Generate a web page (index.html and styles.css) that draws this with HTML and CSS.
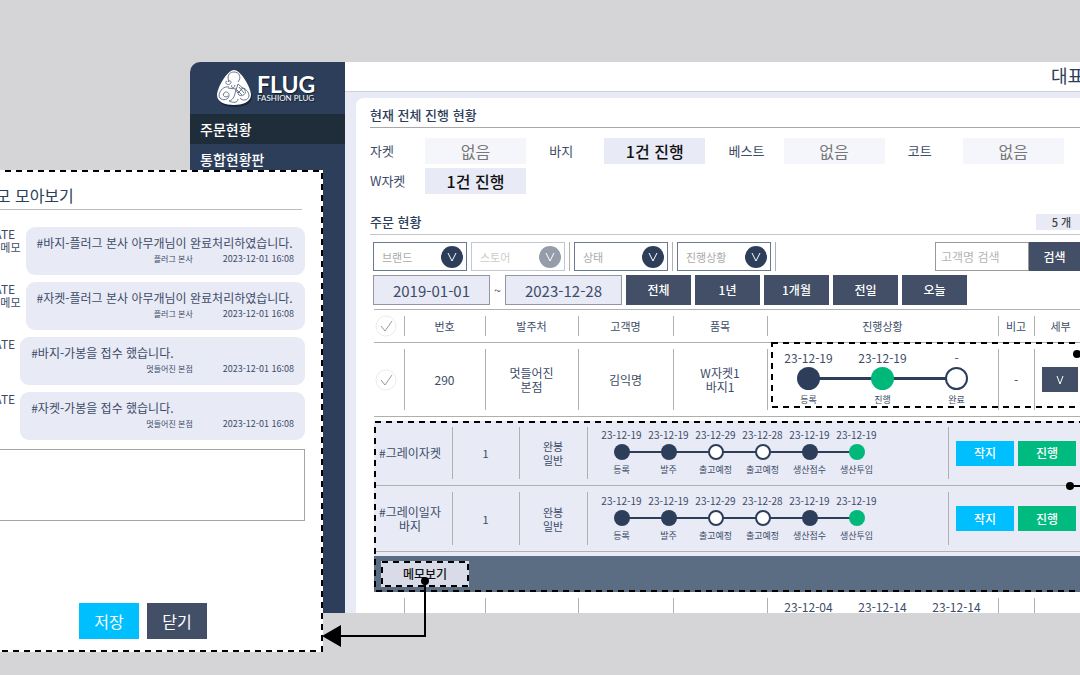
FILE: index.html
```html
<!DOCTYPE html>
<html lang="ko">
<head>
<meta charset="utf-8">
<title>FLUG 주문현황</title>
<link rel="stylesheet" href="styles.css">
</head>
<body>
<div class="app">
  <aside class="sidebar">
    <a class="logo" href="#">
      <svg class="logo-mark" viewBox="0 0 36 38" aria-hidden="true">
        <path class="logo-shadow" d="M19 3C26 3 36 21 36 28C36 35 27 38 19 38C10 38 2 35 2 28C2 21 12 3 19 3Z"/>
        <path class="logo-body" d="M18 1C25 1 35 19 35 26C35 33 26 36 18 36C9 36 1 33 1 26C1 19 11 1 18 1Z"/>
        <g class="logo-lines">
          <path d="M13 13C10 5 15 3 18 3C23 3 26 8 22 13"/>
          <path d="M11 12C8 13 11 17 14 15C17 13 13 10 12 13M16 16C14 19 19 20 19 16"/>
          <path d="M13 18C8 17 4 21 3 26C3 31 9 32 12 29C15 25 11 21 8 24C6 27 9 29 12 27"/>
          <path d="M25 19C29 18 33 23 33 27C32 32 26 32 24 29"/>
          <path d="M12 19L20 20C19 25 18 31 13 32C17 34 22 34 22 30"/>
          <path d="M22 15L29 21C31 25 26 28 23 26L20 21ZM23 18L28 24M21 21L26 26M27 19L22 24"/>
        </g>
      </svg>
      <span class="logo-text"><strong>FLUG</strong><small>FASHION PLUG</small></span>
    </a>
    <nav class="menu">
      <a class="menu-item active" href="#">주문현황</a>
      <a class="menu-item" href="#">통합현황판</a>
    </nav>
  </aside>

  <main class="main">
    <header class="topbar">대표</header>
    <div class="panel">
      <h2 class="section-title">현재 전체 진행 현황</h2>
      <div class="summary">
        <div class="stat"><span>자켓</span><b class="none">없음</b></div>
        <div class="stat"><span>바지</span><b>1건 진행</b></div>
        <div class="stat"><span>베스트</span><b class="none">없음</b></div>
        <div class="stat"><span>코트</span><b class="none">없음</b></div>
        <div class="stat"><span>W자켓</span><b>1건 진행</b></div>
      </div>

      <div class="section-title orders-title"><h2>주문 현황</h2><span class="count">5 개</span></div>

      <form class="filters">
        <div class="filter-row">
          <div class="pick"><select aria-label="브랜드"><option>브랜드</option></select><svg viewBox="0 0 22 22"><circle cx="11" cy="11" r="11"/><path d="M7 7L11 15L15 7"/></svg></div>
          <div class="pick muted"><select aria-label="스토어" disabled><option>스토어</option></select><svg viewBox="0 0 22 22"><circle cx="11" cy="11" r="11"/><path d="M7 7L11 15L15 7"/></svg></div>
          <i class="bar"></i>
          <div class="pick"><select aria-label="상태"><option>상태</option></select><svg viewBox="0 0 22 22"><circle cx="11" cy="11" r="11"/><path d="M7 7L11 15L15 7"/></svg></div>
          <i class="bar"></i>
          <div class="pick"><select aria-label="진행상황"><option>진행상황</option></select><svg viewBox="0 0 22 22"><circle cx="11" cy="11" r="11"/><path d="M7 7L11 15L15 7"/></svg></div>
          <i class="bar"></i>
          <div class="search"><input type="text" aria-label="고객명 검색" placeholder="고객명 검색"><button type="button">검색</button></div>
        </div>
        <div class="filter-row dates">
          <input type="text" aria-label="시작일" value="2019-01-01"><span>~</span><input type="text" aria-label="종료일" value="2023-12-28">
          <div class="ranges">
            <button type="button">전체</button>
            <button type="button">1년</button>
            <button type="button">1개월</button>
            <button type="button">전일</button>
            <button type="button">오늘</button>
          </div>
        </div>
      </form>

      <table class="orders">
        <colgroup><col class="c-check"><col class="c-no"><col class="c-shop"><col class="c-name"><col class="c-item"><col class="c-progress"><col class="c-note"><col></colgroup>
        <thead>
          <tr>
            <th><label class="check"><input type="checkbox" aria-label="전체 선택"><svg viewBox="0 0 22 22"><circle cx="11" cy="11" r="10"/><path d="M6 11L10 16L17 6"/></svg></label></th>
            <th>번호</th><th>발주처</th><th>고객명</th><th>품목</th><th>진행상황</th><th>비고</th><th>세부</th>
          </tr>
        </thead>
        <tbody>
          <tr>
            <td><label class="check"><input type="checkbox" aria-label="290 선택"><svg viewBox="0 0 22 22"><circle cx="11" cy="11" r="10"/><path d="M6 11L10 16L17 6"/></svg></label></td>
            <td>290</td><td>멋들어진<br>본점</td><td>김익명</td><td>W자켓1<br>바지1</td>
            <td class="progress-cell">
              <ol class="steps">
                <li><time>23-12-19</time><i class="dot"></i><span>등록</span></li>
                <li><time>23-12-19</time><i class="dot now"></i><span>진행</span></li>
                <li><time>-</time><i class="dot open"></i><span>완료</span></li>
              </ol>
              <svg class="outline progress-outline" aria-hidden="true"><rect width="100%" height="100%"/></svg>
            </td>
            <td>-</td>
            <td><button class="toggle" type="button" aria-label="세부 열기"><svg viewBox="0 0 12 12"><path d="M3 2L6 10L9 2"/></svg></button></td>
          </tr>
          <tr>
            <td class="detail-cell" colspan="8">
              <div class="detail">
                <table class="items">
                  <colgroup><col class="i-name"><col class="i-qty"><col class="i-type"><col class="i-progress"><col></colgroup>
                  <tbody>
                    <tr>
                      <td>#그레이자켓</td><td>1</td><td>완봉<br>일반</td>
                      <td>
                        <ol class="steps small">
                          <li><time>23-12-19</time><i class="dot"></i><span>등록</span></li>
                          <li><time>23-12-19</time><i class="dot"></i><span>발주</span></li>
                          <li><time>23-12-29</time><i class="dot open"></i><span>출고예정</span></li>
                          <li><time>23-12-28</time><i class="dot open"></i><span>출고예정</span></li>
                          <li><time>23-12-19</time><i class="dot"></i><span>생산접수</span></li>
                          <li><time>23-12-19</time><i class="dot now"></i><span>생산투입</span></li>
                        </ol>
                      </td>
                      <td><div class="actions"><button class="cyan" type="button">작지</button><button class="green" type="button">진행</button></div></td>
                    </tr>
                    <tr>
                      <td>#그레이일자<br>바지</td><td>1</td><td>완봉<br>일반</td>
                      <td>
                        <ol class="steps small">
                          <li><time>23-12-19</time><i class="dot"></i><span>등록</span></li>
                          <li><time>23-12-19</time><i class="dot"></i><span>발주</span></li>
                          <li><time>23-12-29</time><i class="dot open"></i><span>출고예정</span></li>
                          <li><time>23-12-28</time><i class="dot open"></i><span>출고예정</span></li>
                          <li><time>23-12-19</time><i class="dot"></i><span>생산접수</span></li>
                          <li><time>23-12-19</time><i class="dot now"></i><span>생산투입</span></li>
                        </ol>
                      </td>
                      <td><div class="actions"><button class="cyan" type="button">작지</button><button class="green" type="button">진행</button></div></td>
                    </tr>
                  </tbody>
                </table>
                <div class="detail-bar">
                  <button class="memo-open" type="button">메모보기<svg class="outline" aria-hidden="true"><rect width="100%" height="100%"/></svg></button>
                </div>
                <svg class="outline" aria-hidden="true"><rect width="100%" height="100%"/></svg>
              </div>
            </td>
          </tr>
          <tr>
            <td></td><td></td><td></td><td></td><td></td>
            <td>
              <ol class="steps">
                <li><time>23-12-04</time><i class="dot"></i></li>
                <li><time>23-12-14</time><i class="dot"></i></li>
                <li><time>23-12-14</time><i class="dot"></i></li>
              </ol>
            </td>
            <td></td><td></td>
          </tr>
        </tbody>
      </table>
    </div>
  </main>
</div>

<section class="memo">
  <h2>메모 모아보기</h2>
  <ul>
    <li><p class="tag">UPDATE<br><em>플러그메모</em></p><article><p>#바지-플러그 본사 아무개님이 완료처리하였습니다.</p><footer><span>플러그 본사</span><time>2023-12-01 16:08</time></footer></article></li>
    <li><p class="tag">UPDATE<br><em>플러그메모</em></p><article><p>#자켓-플러그 본사 아무개님이 완료처리하였습니다.</p><footer><span>플러그 본사</span><time>2023-12-01 16:08</time></footer></article></li>
    <li><p class="tag">UPDATE<br><em class="shop">샵메모</em></p><article><p>#바지-가봉을 접수 했습니다.</p><footer><span>멋들어진 본점</span><time>2023-12-01 16:08</time></footer></article></li>
    <li><p class="tag">UPDATE<br><em class="shop">샵메모</em></p><article><p>#자켓-가봉을 접수 했습니다.</p><footer><span>멋들어진 본점</span><time>2023-12-01 16:08</time></footer></article></li>
  </ul>
  <textarea aria-label="메모 입력"></textarea>
  <div class="memo-actions"><button class="cyan" type="button">저장</button><button type="button">닫기</button></div>
  <svg class="outline" aria-hidden="true"><rect width="100%" height="100%"/></svg>
</section>

<svg class="callouts" aria-hidden="true">
  <circle cx="425" cy="581" r="4"/>
  <path class="wire" d="M425 581V636H338"/>
  <path d="M322 636L341 625V647Z"/>
  <circle cx="1077" cy="354" r="4"/>
  <path class="wire" d="M1077 354H1100"/>
  <circle cx="1070" cy="486" r="4"/>
  <path class="wire" d="M1070 486H1100"/>
</svg>
</body>
</html>
```
FILE: styles.css
```css
* { box-sizing: border-box; }

body {
  position: relative;
  height: 100vh;
  margin: 0;
  padding: 62px 0 0 190px;
  overflow: hidden;
  background: #d5d5d7;
  color: #3d4c67;
  font: 12px/14px "Noto Sans CJK KR", "Noto Sans", sans-serif;
}

h2, p, ul, ol { margin: 0; padding: 0; font-weight: 400; list-style: none; }
h2 { color: #2c3e5a; }
i, em { font-style: normal; }
a { color: inherit; text-decoration: none; }

button, input, select, textarea {
  margin: 0;
  padding: 0;
  border: 0;
  border-radius: 0;
  color: inherit;
  font: inherit;
}

button {
  background: #424f66;
  color: #fff;
  font-weight: 500;
  text-align: center;
}

button.cyan { background: #00bfff; }
button.green { background: #00ba80; }

.outline {
  position: absolute;
  inset: 1px;
  width: calc(100% - 2px);
  height: calc(100% - 2px);
  overflow: visible;
  pointer-events: none;
}

.outline rect {
  fill: none;
  stroke: #000;
  stroke-width: 2;
  stroke-dasharray: 6 5;
}

/* Window */
.app {
  display: flex;
  height: calc(100vh - 124px);
  margin-right: -20px;
  overflow: hidden;
  border-radius: 10px 0 0 0;
  background: #e8eaf6;
}

.sidebar {
  flex: 0 0 155px;
  background: #2c3e5a;
  color: #fff;
}

.logo {
  display: flex;
  align-items: center;
  gap: 5px;
  height: 52px;
  padding-left: 26px;
}

.logo-mark { width: 36px; height: 38px; }
.logo-shadow { fill: #17263b; }
.logo-body { fill: #fff; }
.logo-lines { fill: none; stroke: #6a788e; stroke-width: 1; }
.logo-text { display: flex; flex-direction: column; font-family: Lato, sans-serif; text-shadow: 1px 1px 1px #101c2c; }
.logo-text strong { font-size: 23px; font-weight: 700; line-height: 20px; }
.logo-text small { font-size: 8px; line-height: 8px; }

.menu-item {
  display: block;
  padding: 0 10px;
  font-size: 14px;
  font-weight: 500;
  line-height: 30px;
}

.menu-item.active { background: #1f2d3b; }

.main { flex: 1; min-width: 0; }

.topbar {
  height: 30px;
  padding-right: 16px;
  border-bottom: 1px solid #cdd0da;
  background: #fff;
  color: #2c3e5a;
  font-size: 18px;
  line-height: 27px;
  text-align: right;
}

.panel {
  min-height: 100%;
  margin: 6px 0 0 11px;
  padding: 5px 13px 0 14px;
  border-radius: 8px 0 0 0;
  background: #fff;
}

.section-title, .section-title h2 {
  font-size: 13px;
  font-weight: 500;
  line-height: 24px;
}

.section-title { border-bottom: 1px solid #a8a8a8; }

.summary {
  display: grid;
  grid-template-columns: repeat(4, 1fr);
  row-gap: 4px;
  padding: 10px 0 16px;
}

.stat { display: flex; align-items: center; font-size: 13px; }
.stat span { width: 55px; }

.stat b {
  width: 101px;
  background: #e8eaf6;
  color: #111;
  font-size: 16px;
  font-weight: 500;
  line-height: 26px;
  text-align: center;
}

.stat .none { background: #f5f6fb; color: #777; font-weight: 400; }

.orders-title {
  display: flex;
  align-items: center;
  justify-content: space-between;
  border-color: #c8c8c8;
}

.count {
  width: 51px;
  background: #e8eaf6;
  color: #444;
  font-size: 11px;
  line-height: 16px;
  text-align: center;
}

/* Filters */
.filters { padding: 7px 7px 4px 3px; }
.filter-row { display: flex; gap: 4px; height: 29px; }

.pick { position: relative; width: 94px; }

.pick select {
  width: 100%;
  height: 100%;
  padding-left: 8px;
  border: 1px solid #6b7890;
  background: #fff;
  color: #aaa;
  font-size: 11px;
  appearance: none;
}

.pick svg { position: absolute; top: 4px; right: 4px; width: 22px; height: 22px; pointer-events: none; }
.pick circle { fill: #2c3e5a; }
.pick path { fill: none; stroke: #fff; stroke-width: 1; }
.pick.muted select { border-color: #c3c7d2; color: #ccc; opacity: 1; }
.pick.muted circle { fill: #959dab; }

.bar { width: 1px; background: #b0b0b0; }

.search { display: flex; margin-left: auto; }
.search input { width: 94px; padding-left: 5px; border: 1px solid #999; background: #fff; }
.search input::placeholder { color: #b5b5b5; opacity: 1; }
.search button { width: 51px; }

.dates { height: 30px; margin-top: 4px; }
.dates > input { width: 117px; border: 1px solid #9297a8; background: #e8eaf6; font-size: 15px; text-align: center; }
.dates > span { width: 7px; line-height: 30px; text-align: center; }
.ranges { display: flex; gap: 4px; }
.ranges button { width: 65px; }

/* Orders */
table { width: 100%; border-spacing: 0; table-layout: fixed; }
th, td { padding: 0; font-weight: 400; text-align: center; }

.orders { width: calc(100% - 4px); margin-left: 4px; border-top: 1px solid #b0b0b0; }
.orders th { height: 33px; font-size: 11px; }
.orders td { height: 74px; }
.c-check { width: 30px; }
.c-no { width: 81px; }
.c-shop { width: 93px; }
.c-name { width: 95px; }
.c-item { width: 94px; }
.c-progress { width: 231px; }
.c-note { width: 36px; }

.orders th, .orders td { border-bottom: 1px solid #b0b0b0; }

.orders th + th, .orders td + td {
  background: linear-gradient(#b0b0b0, #b0b0b0) left center / 1px calc(100% - 12px) no-repeat;
}

.check { position: relative; display: block; width: 22px; height: 22px; margin-left: 1px; }
.check input { position: absolute; inset: 0; width: 22px; height: 22px; appearance: none; }
.check svg { display: block; }
.check circle { fill: none; stroke: #ececee; }
.check path { fill: none; stroke: #999; }

.progress-cell { position: relative; }
.orders .progress-outline { inset: 0 auto auto 5px; width: 400px; height: 64px; }

.toggle { display: grid; place-items: center; width: 36px; height: 25px; margin-left: 8px; }
.toggle svg { width: 12px; height: 12px; fill: none; stroke: #fff; }

/* Progress steps */
.steps { display: flex; justify-content: center; }
.steps li { position: relative; display: flex; flex-direction: column; align-items: center; width: 74px; height: 58px; }
.steps li + li::before {
  position: absolute;
  top: 26px;
  right: 50%;
  width: 100%;
  height: 3px;
  background: #2c3e5a;
  content: "";
}

.dot { position: relative; z-index: 1; width: 23px; height: 23px; margin: 2px 0 3px; border-radius: 50%; background: #2c3e5a; }
.dot.now { background: #00b87a; }
.dot.open { border: 2px solid #2c3e5a; background: #fff; }
.steps span { font-size: 9px; }

.steps.small { justify-content: flex-start; padding-left: 11px; }
.steps.small li { width: 47px; height: 50px; }
.steps.small li + li::before { top: 23px; height: 2px; }
.steps.small time { font-size: 10px; }
.steps.small .dot { width: 16px; height: 16px; }

/* Expanded order */
.orders .detail-cell { height: auto; padding-top: 4px; border-bottom: 0; }
.detail { position: relative; background: #e8eaf6; }
.items { font-size: 11px; }
.orders .items td { height: 65px; }
.orders .items tr + tr td { height: 66px; }
.items td:first-child { padding-right: 6px; font-size: 12px; }
.i-name { width: 78px; }
.i-qty { width: 67px; }
.i-type { width: 68px; }
.i-progress { width: 361px; }
.actions { display: flex; gap: 4px; padding-left: 8px; }
.actions button { width: 58px; height: 25px; font-size: 12px; }
.detail-bar { margin-top: 4px; padding: 5px 7px; background: #5a6d82; }
.memo-open { position: relative; display: block; width: 88px; height: 26px; background: #d9dce8; color: #111; }

/* Memo window */
.memo {
  position: absolute;
  top: 170px;
  left: -40px;
  width: 363px;
  height: 482px;
  padding: 11px 18px 0 10px;
  background: #fff;
}

.memo h2 { padding-left: 11px; margin-right: 3px; border-bottom: 1px solid #bbb; font-size: 16px; line-height: 28px; }
.memo ul { display: grid; gap: 7px; padding: 17px 0 9px; }
.memo li { display: flex; gap: 5px; }
.tag { line-height: 13px; }
.tag em { font-size: 11px; }
.tag .shop { color: #5b9fd0; }

.memo article { flex: 1; height: 48px; padding: 8px 11px 0; border-radius: 9px; background: #e8eaf6; white-space: nowrap; }
.memo article p { line-height: 16px; }
.memo footer { display: flex; justify-content: flex-end; gap: 30px; font-size: 9px; line-height: 15px; }
.memo footer span { font-size: 8px; }

.memo textarea { display: block; width: 100%; height: 72px; border: 1px solid #a5a5a5; background: #fff; resize: none; }
.memo-actions { display: flex; gap: 8px; padding: 82px 0 0 109px; }
.memo-actions button { width: 60px; height: 36px; font-size: 16px; font-weight: 400; }

.callouts { position: absolute; inset: 0; width: 100%; height: 100%; pointer-events: none; }
.wire { fill: none; stroke: #000; stroke-width: 2; }
```
